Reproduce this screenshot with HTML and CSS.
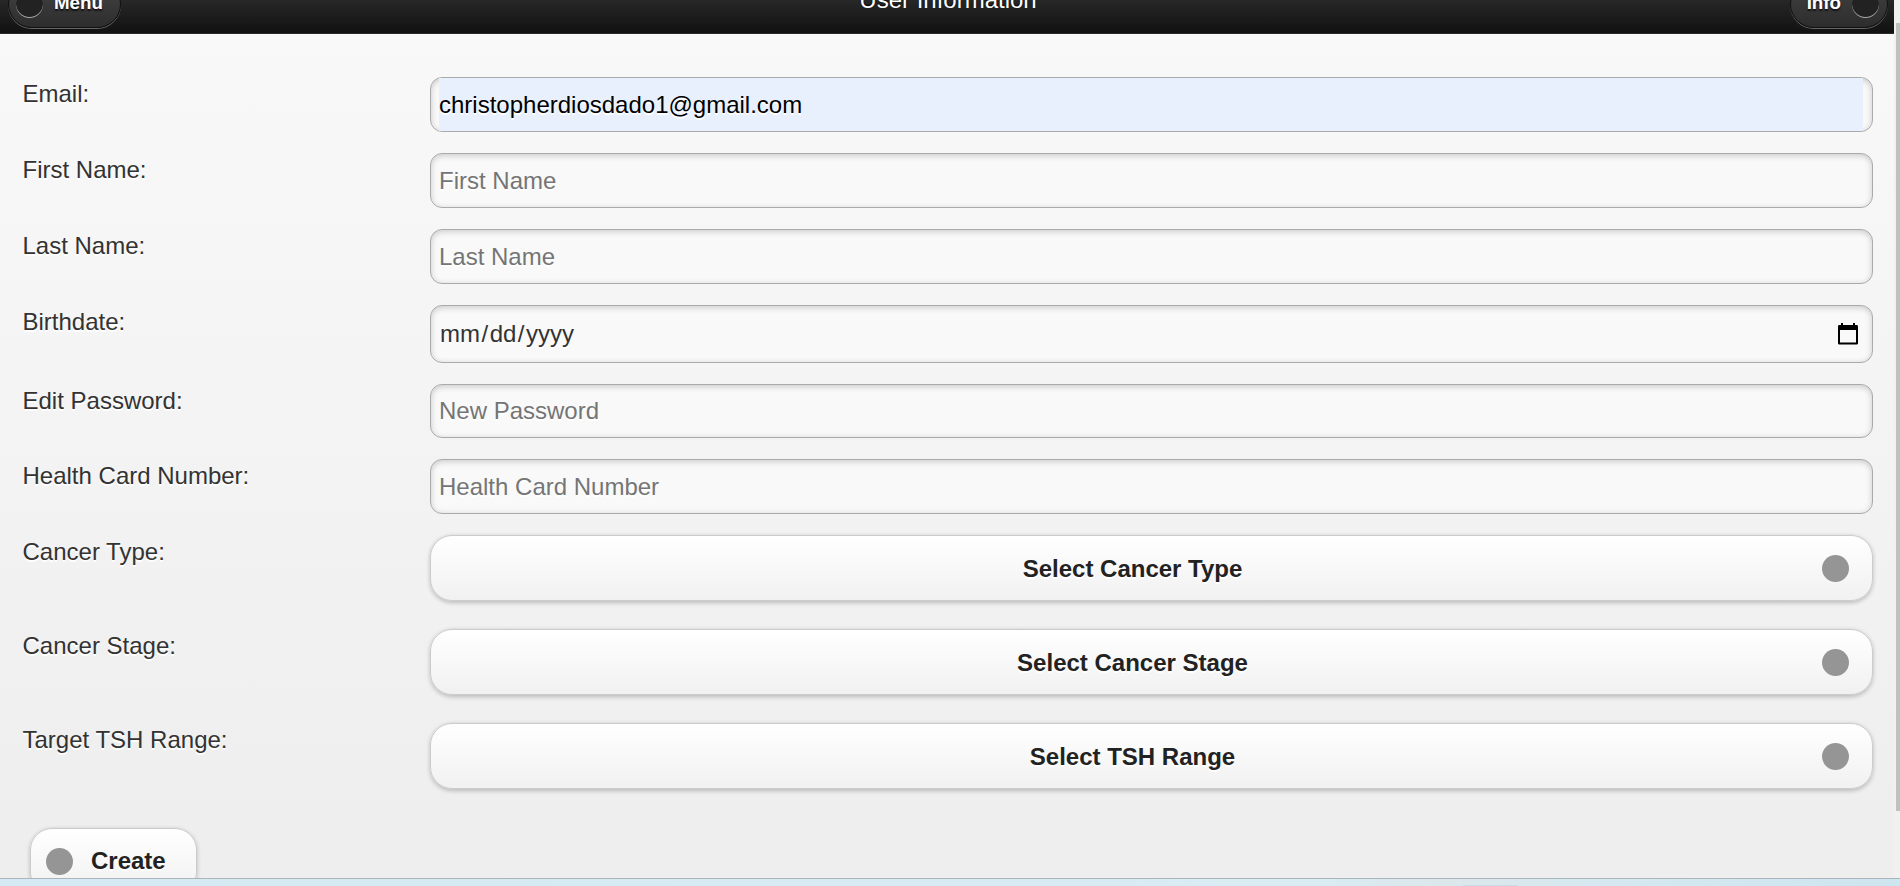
FILE: index.html
```html
<!DOCTYPE html>
<html lang="en">
<head>
<meta charset="utf-8">
<title>User Information</title>
<link rel="stylesheet" href="styles.css">
</head>
<body>
<div class="window">
  <div class="page">
    <header class="header">
      <div class="nav-btn"><span class="nav-dot"></span><span class="nav-text">Menu</span></div>
      <h1 class="title">User Information</h1>
      <div class="nav-btn nav-right"><span class="nav-text">Info</span><span class="nav-dot"></span></div>
    </header>
    <main class="form">
      <div class="row"><div class="label">Email:</div><div class="field autofill"><span class="fill">christopherdiosdado1@gmail.com</span></div></div>
      <div class="row"><div class="label">First Name:</div><div class="field hint">First Name</div></div>
      <div class="row"><div class="label">Last Name:</div><div class="field hint">Last Name</div></div>
      <div class="row"><div class="label">Birthdate:</div><div class="field date"><span class="parts"><span>mm</span><span>/</span><span>dd</span><span>/</span><span>yyyy</span></span>
        <svg class="calendar" viewBox="0 0 20 22" width="20" height="22"><path d="M3 0h2v2h10V0h2v2h1.6A1.4 1.4 0 0 1 20 3.4v16.8a1.3 1.3 0 0 1-1.3 1.3H1.3A1.3 1.3 0 0 1 0 20.200V3.400A1.400 1.400 0 0 1 1.400 2H3zM2 7v12.600h16V7z" fill="#000" fill-rule="evenodd"/></svg></div></div>
      <div class="row"><div class="label">Edit Password:</div><div class="field hint short">New Password</div></div>
      <div class="row"><div class="label">Health Card Number:</div><div class="field hint">Health Card Number</div></div>
      <div class="row pick"><div class="label">Cancer Type:</div><div class="select"><span class="choice">Select Cancer Type</span><span class="dot"></span></div></div>
      <div class="row pick"><div class="label">Cancer Stage:</div><div class="select"><span class="choice">Select Cancer Stage</span><span class="dot"></span></div></div>
      <div class="row pick"><div class="label">Target TSH Range:</div><div class="select"><span class="choice">Select TSH Range</span><span class="dot"></span></div></div>
      <div class="create"><span class="dot"></span><span class="create-text">Create</span></div>
    </main>
  </div>
  <div class="scrollbar"><div class="thumb"></div></div>
</div>
<div class="taskbar"><span class="task"></span></div>
</body>
</html>
```
FILE: styles.css
```css
* { box-sizing: border-box; }
body {
  margin: 0;
  width: 1900px;
  height: 886px;
  overflow: hidden;
  font: 24px/33px "Liberation Sans", Arial, sans-serif;
  color: #333;
}
.window { display: flex; height: 878px; overflow: hidden; }
.page {
  width: 1894px;
  background: linear-gradient(#f9f9f9, #eee 96%);
  text-shadow: 0 1.5px 0 #fff;
}
.header {
  display: grid;
  grid-template-columns: 1fr auto 1fr;
  align-items: start;
  height: 65px;
  margin-top: -31px;
  padding: 11px 6px 0 8px;
  border-bottom: 1px solid #2a2a2a;
  background: linear-gradient(#3c3c3c, #111);
  color: #fff;
  text-shadow: 0 -1.5px 1.5px #000;
}
.title { margin: 0; padding-top: 6px; font-size: 24px; line-height: 27px; font-weight: normal; }
.nav-btn {
  display: flex;
  align-items: center;
  justify-self: start;
  gap: 11px;
  height: 48px;
  padding: 0 17px 0 7px;
  border: 1px solid #111;
  border-radius: 24px;
  background: linear-gradient(#444, #2d2d2d);
  box-shadow: 0 1px 0 #666;
  font-size: 18.75px;
  font-weight: bold;
  text-shadow: 0 1.5px 1.5px #111;
}
.nav-text { padding-bottom: 3px; }
.nav-right { justify-self: end; padding: 0 8px 0 16px; }
.nav-dot { width: 27px; height: 27px; margin-bottom: 1px; border-radius: 50%; background: #222; box-shadow: 0 1px 0 #aaa; }
.form { display: flex; flex-direction: column; padding: 43px 21px 0 22.5px; }
.row { display: flex; margin-bottom: 21px; }
.pick { margin-bottom: 28px; }
.label { width: 407.5px; flex: none; }
.field {
  display: flex;
  flex: 1;
  align-items: center;
  height: 55px;
  padding: 0 9px 0 8px;
  border: 1px solid #aaa;
  border-radius: 12px;
  background: #f9f9f9;
  box-shadow: inset 0 1.5px 6px rgba(0, 0, 0, .2);
}
.hint { color: #757575; }
.short { height: 54px; padding-bottom: 1px; }
.autofill { color: #000; }
.fill { flex: 1; line-height: 53px; background: #e8f0fe; }
.date { height: 58px; justify-content: space-between; padding-right: 14px; }
.parts { display: flex; gap: 1.5px; padding: 0 0 2px 1px; }
.calendar { display: block; }
.select, .create {
  display: flex;
  align-items: center;
  height: 66px;
  border: 1px solid #ccc;
  border-radius: 22px;
  background: linear-gradient(#fff, #f1f1f1);
  box-shadow: 0 1.5px 4.5px rgba(0, 0, 0, .22);
  color: #222;
  font-weight: bold;
}
.select { flex: 1; padding: 0 23px 0 12px; }
.choice { flex: 1; text-align: center; }
.dot { flex: none; width: 27px; height: 27px; border-radius: 50%; background: #959595; }
.create { align-self: flex-start; width: 167px; margin: 11px 0 0 7.5px; padding-left: 15px; gap: 18px; }
.create-text { padding-bottom: 2px; }
.scrollbar { width: 6px; padding: 23px 0 0 2px; background: #f1f1f1; }
.thumb { height: 788px; background: #c1c1c1; }
.taskbar {
  height: 8px;
  padding: 6px 0 0 1463px;
  border-top: 1px solid #a9b5ba;
  background: linear-gradient(90deg, #d5eaf4, #d9ebf3 70%, #dce7eb 76%, #d5e8f1 85%, #cde5ef);
}
.task { display: block; width: 55px; height: 2px; background: #cbdbe3; }
```
